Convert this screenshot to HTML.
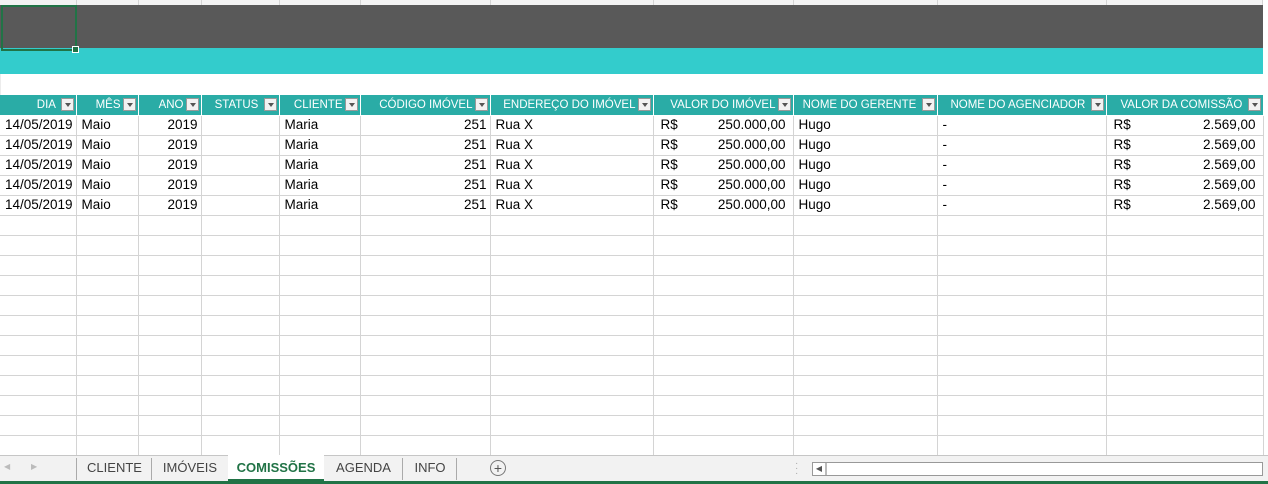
<!DOCTYPE html>
<html><head><meta charset="utf-8"><style>
body{margin:0;width:1268px;height:484px;background:#fff;position:relative;overflow:hidden;font-family:"Liberation Sans",Arial,sans-serif}
.top{position:absolute;left:0;top:0;width:1263px;height:5px;background:#f3f3f3;border-bottom:1px solid #c8c8c8}
.dark{position:absolute;left:0;top:5px;width:1263px;height:43px;background:#595959}
.teal{position:absolute;left:0;top:48px;width:1263px;height:26px;background:#33cccc}
.sel{position:absolute;left:1px;top:5px;width:72px;height:42px;border:2px solid #217346;box-sizing:content-box}
.sel:after{content:"";position:absolute;right:-4px;bottom:-4px;width:5px;height:5px;background:#217346;border:1px solid #fff}
.vl{position:absolute;top:0;height:5px;width:1px;background:#d4d4d4}
.wl{position:absolute;top:74px;height:21px;width:1px;background:#ececec}
table{position:absolute;left:0;top:95px;border-collapse:collapse;table-layout:fixed;width:1263px}
td{height:20px;padding:0 3px 0 5px;border-right:1px solid #d4d4d4;border-bottom:1px solid #d4d4d4;font-size:13.5px;color:#000;white-space:nowrap;overflow:hidden;box-sizing:border-box;line-height:18px}
tr.h td{background:#2aaca6;color:#fff;font-size:11.5px;text-align:right;border-right:1px solid #fff;border-bottom:1px solid #fff;padding:0 2px 0 0}
.dd{display:inline-block;width:13px;height:13px;background:#f2f2f2;border:1px solid #999;vertical-align:middle;margin-left:2px;position:relative;box-sizing:border-box}
.dd:after{content:"";position:absolute;left:3px;top:4px;border-left:3px solid transparent;border-right:3px solid transparent;border-top:4px solid #555}
.r{text-align:right}
.rs{display:flex;justify-content:space-between;padding:0 4px 0 2px}
.bar{position:absolute;left:0;top:455px;width:1268px;height:26px;background:#f2f2f2;border-top:1px solid #c6c6c6}
.green{position:absolute;left:0;top:481px;width:1268px;height:3px;background:#217346}
.tab{position:absolute;top:458px;height:22px;font-size:13px;color:#444;line-height:20px;border-left:1px solid #aaa;text-align:center}
</style></head><body>
<div class="top"></div>
<div class="vl" style="left:76px"></div><div class="vl" style="left:138px"></div><div class="vl" style="left:201px"></div><div class="vl" style="left:279px"></div><div class="vl" style="left:360px"></div><div class="vl" style="left:490px"></div><div class="vl" style="left:653px"></div><div class="vl" style="left:793px"></div><div class="vl" style="left:937px"></div><div class="vl" style="left:1106px"></div><div class="vl" style="left:1262px"></div>
<div class="dark"></div><div class="teal"></div>
<div class="wl" style="left:0"></div>
<div class="sel"></div>
<table>
<colgroup><col style="width:76px"><col style="width:62px"><col style="width:63px"><col style="width:78px"><col style="width:81px"><col style="width:130px"><col style="width:163px"><col style="width:140px"><col style="width:144px"><col style="width:169px"><col style="width:157px"></colgroup>
<tr class="h"><td>DIA <span class="dd"></span></td><td>MÊS<span class="dd"></span></td><td>ANO<span class="dd"></span></td><td>STATUS <span class="dd"></span></td><td>CLIENTE<span class="dd"></span></td><td>CÓDIGO IMÓVEL<span class="dd"></span></td><td>ENDEREÇO DO IMÓVEL<span class="dd"></span></td><td>VALOR DO IMÓVEL<span class="dd"></span></td><td>NOME DO GERENTE <span class="dd"></span></td><td>NOME DO AGENCIADOR <span class="dd"></span></td><td>VALOR DA COMISSÃO <span class="dd"></span></td></tr>
<tr><td>14/05/2019</td><td>Maio</td><td class="r">2019</td><td></td><td>Maria</td><td class="r">251</td><td>Rua X</td><td><div class="rs"><span>R$</span><span>250.000,00</span></div></td><td>Hugo</td><td>-</td><td><div class="rs"><span>R$</span><span>2.569,00</span></div></td></tr>
<tr><td>14/05/2019</td><td>Maio</td><td class="r">2019</td><td></td><td>Maria</td><td class="r">251</td><td>Rua X</td><td><div class="rs"><span>R$</span><span>250.000,00</span></div></td><td>Hugo</td><td>-</td><td><div class="rs"><span>R$</span><span>2.569,00</span></div></td></tr>
<tr><td>14/05/2019</td><td>Maio</td><td class="r">2019</td><td></td><td>Maria</td><td class="r">251</td><td>Rua X</td><td><div class="rs"><span>R$</span><span>250.000,00</span></div></td><td>Hugo</td><td>-</td><td><div class="rs"><span>R$</span><span>2.569,00</span></div></td></tr>
<tr><td>14/05/2019</td><td>Maio</td><td class="r">2019</td><td></td><td>Maria</td><td class="r">251</td><td>Rua X</td><td><div class="rs"><span>R$</span><span>250.000,00</span></div></td><td>Hugo</td><td>-</td><td><div class="rs"><span>R$</span><span>2.569,00</span></div></td></tr>
<tr><td>14/05/2019</td><td>Maio</td><td class="r">2019</td><td></td><td>Maria</td><td class="r">251</td><td>Rua X</td><td><div class="rs"><span>R$</span><span>250.000,00</span></div></td><td>Hugo</td><td>-</td><td><div class="rs"><span>R$</span><span>2.569,00</span></div></td></tr>
<tr><td></td><td></td><td></td><td></td><td></td><td></td><td></td><td></td><td></td><td></td><td></td></tr>
<tr><td></td><td></td><td></td><td></td><td></td><td></td><td></td><td></td><td></td><td></td><td></td></tr>
<tr><td></td><td></td><td></td><td></td><td></td><td></td><td></td><td></td><td></td><td></td><td></td></tr>
<tr><td></td><td></td><td></td><td></td><td></td><td></td><td></td><td></td><td></td><td></td><td></td></tr>
<tr><td></td><td></td><td></td><td></td><td></td><td></td><td></td><td></td><td></td><td></td><td></td></tr>
<tr><td></td><td></td><td></td><td></td><td></td><td></td><td></td><td></td><td></td><td></td><td></td></tr>
<tr><td></td><td></td><td></td><td></td><td></td><td></td><td></td><td></td><td></td><td></td><td></td></tr>
<tr><td></td><td></td><td></td><td></td><td></td><td></td><td></td><td></td><td></td><td></td><td></td></tr>
<tr><td></td><td></td><td></td><td></td><td></td><td></td><td></td><td></td><td></td><td></td><td></td></tr>
<tr><td></td><td></td><td></td><td></td><td></td><td></td><td></td><td></td><td></td><td></td><td></td></tr>
<tr><td></td><td></td><td></td><td></td><td></td><td></td><td></td><td></td><td></td><td></td><td></td></tr>
<tr><td></td><td></td><td></td><td></td><td></td><td></td><td></td><td></td><td></td><td></td><td></td></tr>
</table>
<div class="bar"></div>
<div style="position:absolute;left:4px;top:462px;font-size:8px;color:#bbb">◀</div>
<div style="position:absolute;left:31px;top:462px;font-size:8px;color:#bbb">▶</div>
<div class="tab" style="left:76px;width:75px">CLIENTE</div>
<div class="tab" style="left:151px;width:76px">IMÓVEIS</div>
<div style="position:absolute;left:228px;top:455px;width:96px;height:24px;background:#fff;border-bottom:2px solid #217346;color:#217346;font-weight:bold;font-size:13px;text-align:center;line-height:25px">COMISSÕES</div>
<div class="tab" style="left:325px;width:77px;border-left:none">AGENDA</div>
<div class="tab" style="left:402px;width:54px">INFO</div>
<div class="tab" style="left:456px;width:1px"></div>
<div style="position:absolute;left:490px;top:460px;width:14px;height:14px;border:1px solid #777;border-radius:50%;color:#555;font-size:14px;line-height:14px;text-align:center">+</div>
<div style="position:absolute;left:795px;top:461px;color:#aaa;font-size:10px;line-height:5px">·<br>·<br>·</div>
<div style="position:absolute;left:812px;top:462px;width:449px;height:12px;border:1px solid #999;background:#fff"></div>
<div style="position:absolute;left:813px;top:463px;width:12px;height:12px;border-right:2px solid #bbb;font-size:8px;color:#555;line-height:12px;text-align:center">◀</div>
<div class="green"></div>
</body></html>
